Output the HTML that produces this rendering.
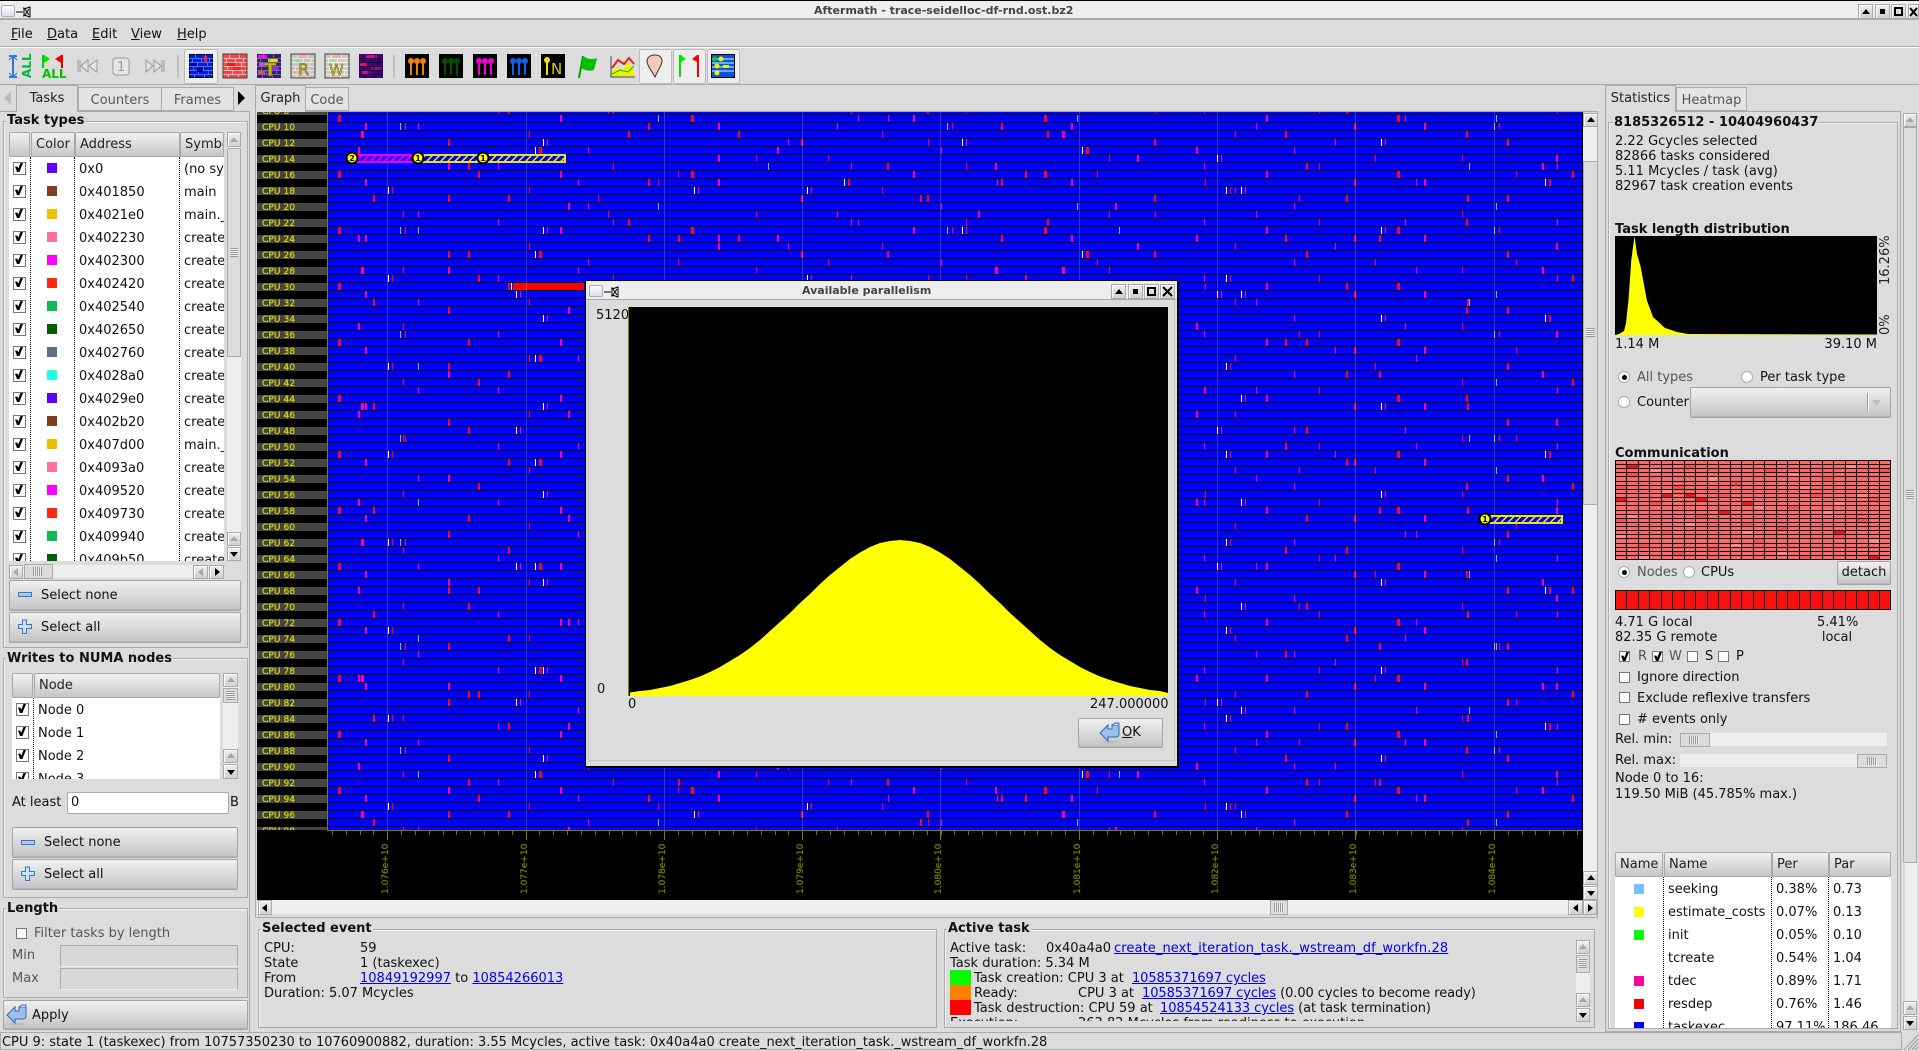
<!DOCTYPE html>
<html><head><meta charset="utf-8"><title>Aftermath</title>
<style>
html,body{margin:0;padding:0}
body{width:1919px;height:1051px;position:relative;overflow:hidden;background:#dcdcdc;font:13px/16px "DejaVu Sans","Liberation Sans",sans-serif;color:#111}
div,span,svg{box-sizing:border-box}
.a{position:absolute}
.t{position:absolute;white-space:nowrap;line-height:16px;margin-top:1px}
.g{color:#555}
.bd{font-weight:bold}
.tab{position:absolute;border:1px solid #aaa;background:#e4e4e4;color:#555;text-align:center;line-height:25px;border-bottom:1px solid #aaa}
.tab.on{background:#dcdcdc;color:#222;border-bottom:0;line-height:25px}
.fr{position:absolute;border:1px solid #aaa;box-shadow:inset 1px 1px 0 #f4f4f4}
.ti{position:absolute;font-weight:bold;background:#dcdcdc;padding:0 1px;white-space:nowrap;line-height:16px;color:#111;margin-top:1px}
.hd{position:absolute;border:1px solid #a8a8a8;border-radius:2px;background:linear-gradient(#f2f2f2,#c6c6c6);line-height:24px;padding-left:4px;color:#222;white-space:nowrap;overflow:hidden}
.btn{position:absolute;border:1px solid #a4a4a4;border-radius:2px;background:linear-gradient(#f0f0f0,#c4c4c4);box-shadow:inset 0 -1px 0 #b4b4b4}
.sb{position:absolute;background:#eee}
.sh{position:absolute;background:#dcdcdc;border:1px solid #aaa}
.sq{position:absolute;background:linear-gradient(#eee,#d0d0d0);border:1px solid #aaa;box-shadow:inset 1px 1px 0 #fff}
.up::after,.dn::after,.lf::after,.rt::after{content:"";position:absolute;left:50%;top:50%;width:0;height:0;border-style:solid;border-color:transparent}
.up::after{margin:-3px 0 0 -4px;border-width:0 4px 5px;border-bottom-color:#000}
.dn::after{margin:-2px 0 0 -4px;border-width:5px 4px 0;border-top-color:#000}
.lf::after{margin:-4px 0 0 -3px;border-width:4px 5px 4px 0;border-right-color:#000}
.rt::after{margin:-4px 0 0 -2px;border-width:4px 0 4px 5px;border-left-color:#000}
.dis::after{opacity:.25}
.cb{position:absolute;width:11px;height:11px;background:#fff;border:1px solid #777}
.cb.k::after{content:"";position:absolute;left:1px;top:0;width:8px;height:9px;background:#000;clip-path:polygon(0 40%,30% 40%,42% 62%,68% 0,100% 0,55% 100%,25% 100%)}
.rd{position:absolute;width:12px;height:12px;border-radius:50%;background:#fff;border:1px solid #aaa}
.rd.k::after{content:"";position:absolute;left:2.5px;top:2.5px;width:5px;height:5px;border-radius:50%;background:#000}
.rw{position:relative;height:23px;line-height:23px;white-space:nowrap}
.rw span{position:absolute;top:1px}
.rw b{position:absolute;width:10px;height:10px;top:6px}
.rw .cb{top:5px}
.l{color:#0000ee;text-decoration:underline}
.lb div{height:8px;margin-bottom:8px;background:#444;color:#d4d400;font-size:9px;line-height:10px;padding-left:5px;white-space:nowrap;letter-spacing:.1px;-webkit-text-stroke:.25px #d4d400}
.dot{position:absolute;width:0;border-left:1px dotted #000}
.w{position:absolute;background:#fff;overflow:hidden}
.sl .t,.at .t{margin-top:2px}
</style></head><body>

<!-- title bar -->
<div class="a" style="left:0;top:0;width:1919px;height:20px;background:#eee;border-top:1px solid #000;border-bottom:2px solid #aaa"></div>
<div class="a" style="left:1px;top:5px;width:14px;height:12px;background:linear-gradient(#fff,#dde);border:1px solid #aab;border-radius:2px"></div>
<svg class="a" style="left:15px;top:6px" width="16" height="12"><path d="M1 6H8M8 2H9V10H8M9 3L15 1V11L9 9M10 3L14 9M14 3L10 9" fill="none" stroke="#000"/></svg>
<div class="t bd" style="left:814px;top:2px;font-size:11px;color:#444">Aftermath - trace-seidelloc-df-rnd.ost.bz2</div>
<div class="sq up" style="left:1858px;top:4px;width:15px;height:15px"></div>
<div class="sq" style="left:1875px;top:4px;width:15px;height:15px"><div class="a" style="left:4px;top:4px;width:5px;height:5px;background:#000"></div></div>
<div class="sq" style="left:1891px;top:4px;width:15px;height:15px"><div class="a" style="left:2px;top:2px;width:9px;height:9px;border:2px solid #000"></div></div>
<div class="sq" style="left:1908px;top:4px;width:11px;height:15px"><svg class="a" style="left:0;top:2px" width="10" height="10"><path d="M1 1L8 9M8 1L1 9" stroke="#000" stroke-width="2"/></svg></div>

<!-- menu -->
<div class="a" style="left:0;top:46px;width:1919px;height:2px;background:linear-gradient(#aaa 50%,#fff 50%)"></div>
<div class="t" style="left:11px;top:26px"><u>F</u>ile</div>
<div class="t" style="left:47px;top:26px"><u>D</u>ata</div>
<div class="t" style="left:92px;top:26px"><u>E</u>dit</div>
<div class="t" style="left:131px;top:26px"><u>V</u>iew</div>
<div class="t" style="left:177px;top:26px"><u>H</u>elp</div>
<div class="a" style="left:0;top:84px;width:1919px;height:1px;background:#aaa"></div>

<!-- toolbar -->
<svg class="a" style="left:0;top:0" width="745" height="90" font-family="DejaVu Sans">
<defs><path id="m" fill="none" d="M0 4.5H24M0 8.5H24M0 12.5H24M0 16.5H24M0 20.5H24M6.5 0V4M16.5 0V4M3.5 5V8M12.5 5V8M20.5 5V8M8.5 9V12M18.5 9V12M4.5 13V16M14.5 13V16M9.5 17V20M19.5 17V20M5.5 21V24M15.5 21V24"/>
<g id="pin" stroke-width="2"><path d="M6 7V21M12 7V21M18 7V21"/></g></defs>
<g fill="#eee" stroke="#bbb"><rect x="184.500" y="49.500" width="33" height="34" rx="2"/><rect x="639.500" y="49.500" width="32" height="34" rx="2"/><rect x="673.500" y="49.500" width="32" height="34" rx="2"/><rect x="707.500" y="49.500" width="32" height="34" rx="2"/></g>
<path d="M13 57V76M9 56H17M9 77H17" stroke="#2878e0" stroke-width="2" fill="none"/><path d="M9 60L13 56L17 60M9 73L13 77L17 73" stroke="#2878e0" fill="none"/>
<text transform="translate(31,78) rotate(-90)" font-size="12" font-weight="bold" fill="#00b840">ALL</text>
<path d="M43 55V68" stroke="#00d000" stroke-width="2"/><path d="M44 55L50 59L44 63Z" fill="#00e000"/><path d="M62 55V68" stroke="#e00000" stroke-width="2"/><path d="M61 55L55 59L61 63Z" fill="#f00"/>
<text x="42" y="78" font-size="12" font-weight="bold" fill="#00c000">ALL</text>
<g fill="#e6e6e6" stroke="#999"><path d="M78 60V72M80 60V72" /><path d="M88 60L81 66L88 72Z"/><path d="M97 60L89 66L97 72Z"/><rect x="113" y="58" width="16" height="17" rx="3"/><path d="M164 60V72M162 60V72"/><path d="M146 60L153 66L146 72Z"/><path d="M154 60L161 66L154 72Z"/></g>
<text x="117" y="71" font-size="13" fill="#999">1</text>
<path d="M178 55V78M394 55V78" stroke="#c0c0c0" stroke-width="2"/>

<g transform="translate(189,54)"><rect width="24" height="24" fill="#000"/><rect x="1" y="1" width="22" height="22" fill="#0818e0"/><use href="#m" stroke="#5098e0" stroke-width=".7"/><rect x="15" y="2" width="3" height="6" fill="#f02040"/><rect x="8" y="14" width="6" height="4" fill="#000080"/><rect x="2" y="9" width="5" height="3" fill="#000080"/></g>
<g transform="translate(223,54)"><rect width="24" height="24" fill="#f04848"/><use href="#m" stroke="#ffb8b8"/><rect x="4" y="9" width="8" height="3" fill="#ff1010"/><rect y="13" x="10" width="7" height="3" fill="#ff2020"/><rect width="24" height="24" fill="none" stroke="#444"/></g>
<g transform="translate(257,54)"><rect width="24" height="24" fill="#302070"/><rect x="1" y="1" width="9" height="3" fill="#f0f"/><rect x="11" y="5" width="10" height="3" fill="#f0e000"/><rect x="2" y="9" width="7" height="3" fill="#e040e0"/><rect x="14" y="13" width="8" height="3" fill="#a020f0"/><rect x="1" y="17" width="7" height="3" fill="#f04080"/><use href="#m" stroke="#8080a0" stroke-width=".7"/><text x="7" y="22" font-size="18" font-weight="bold" fill="#c8b800" stroke="#554" stroke-width=".5">T</text></g>
<g transform="translate(291,54)"><rect width="24" height="24" fill="#c8c4b8"/><rect y="5" width="10" height="3" fill="#a0d0c0"/><rect x="12" y="13" width="10" height="3" fill="#b0c8e8"/><rect y="1" x="8" width="8" height="3" fill="#e8b0a8"/><rect y="17" x="2" width="8" height="3" fill="#e8b0a0"/><use href="#m" stroke="#f0f0f0" stroke-width=".7"/><text x="7" y="21" font-size="16" fill="#b8a800" stroke="#554" stroke-width=".4">R</text><rect width="24" height="24" fill="none" stroke="#444"/></g>
<g transform="translate(325,54)"><rect width="24" height="24" fill="#d0c8b8"/><rect y="5" width="10" height="3" fill="#b0d8b0"/><rect x="12" y="13" width="10" height="3" fill="#d0c8e8"/><rect y="1" x="8" width="8" height="3" fill="#e8b0a8"/><use href="#m" stroke="#fff" stroke-width=".7"/><text x="4" y="21" font-size="15" fill="#c8c800" stroke="#554" stroke-width=".4">W</text><rect width="24" height="24" fill="none" stroke="#444"/></g>
<g transform="translate(359,54)"><rect width="24" height="24" fill="#400080"/><rect x="6" y="1" width="12" height="3" fill="#e00090"/><rect x="1" y="9" width="8" height="3" fill="#f00080"/><rect x="12" y="13" width="10" height="3" fill="#a00090"/><rect x="3" y="17" width="8" height="3" fill="#e000a0"/><use href="#m" stroke="#000" stroke-width=".7"/></g>

<g transform="translate(405,54)"><rect width="24" height="24" fill="#000"/><use href="#pin" stroke="#f08000"/><g fill="#f08000"><circle cx="6" cy="7" r="3"/><circle cx="12" cy="7" r="3"/><circle cx="18" cy="7" r="3"/></g></g>
<g transform="translate(439,54)"><rect width="24" height="24" fill="#000"/><use href="#pin" stroke="#005000"/><g fill="#005000"><circle cx="6" cy="7" r="3"/><circle cx="12" cy="7" r="3"/><circle cx="18" cy="7" r="3"/></g></g>
<g transform="translate(473,54)"><rect width="24" height="24" fill="#000"/><use href="#pin" stroke="#f000d0"/><g fill="#f000d0"><circle cx="6" cy="7" r="3"/><circle cx="12" cy="7" r="3"/><circle cx="18" cy="7" r="3"/></g></g>
<g transform="translate(507,54)"><rect width="24" height="24" fill="#000"/><use href="#pin" stroke="#1060f0"/><g fill="#1060f0"><circle cx="6" cy="7" r="3"/><circle cx="12" cy="7" r="3"/><circle cx="18" cy="7" r="3"/></g></g>
<g transform="translate(541,54)"><rect width="24" height="24" fill="#000"/><path d="M6 7V21" stroke="#f0e000" stroke-width="2"/><circle cx="6" cy="6" r="3" fill="#f0e000"/><text x="10" y="20" font-size="15" fill="#e0d000">N</text></g>
<path d="M579 78L583 56" stroke="#00a000" stroke-width="2"/><path d="M583 56Q590 61 597 58L594 70Q588 72 581 68Z" fill="#00c000"/>
<path d="M611 56V77H635" stroke="#444" fill="none"/><path d="M612 72L618 66L622 71L628 62L634 70V76H612Z" fill="#f0f000"/><path d="M612 68L618 60L624 64L629 58L634 64" stroke="#e02020" stroke-width="2" fill="none"/><path d="M612 74L620 70L628 72L634 66" stroke="#00c000" fill="none"/>
<path d="M655 77C650 68 647 65 647 61C647 57 651 55 655 55C659 55 662 57 662 61C662 65 659 68 655 77Z" fill="#f8c8c0" stroke="#333"/>
<path d="M680 55V77" stroke="#00e000" stroke-width="2"/><path d="M681 55L686 59L681 62Z" fill="#00f000"/><path d="M698 55V77" stroke="#f00000" stroke-width="2"/><path d="M697 55L692 59L697 62Z" fill="#f00"/>
<g transform="translate(711,54)"><rect width="24" height="24" fill="#000"/><rect x="1" y="1" width="22" height="22" fill="#1050e0"/><path d="M1 5H23M1 9H23M1 13H23M1 17H23" stroke="#60b0f0" stroke-width="2"/><circle cx="4" cy="5" r="2.500" fill="#10d010"/><circle cx="10" cy="5" r="2.500" fill="#f0f000"/><circle cx="6" cy="12" r="2.500" fill="#f0f000"/><circle cx="6" cy="19" r="2.500" fill="#f0f000"/><rect x="12" y="11" width="6" height="3" fill="#f0f000"/></g>
</svg>

<!-- left tabs -->
<svg class="a" style="left:3px;top:89px" width="10" height="18"><path d="M8 2L1 9L8 16Z" fill="#bbb"/></svg>
<svg class="a" style="left:236px;top:89px" width="10" height="18"><path d="M2 2L9 9L2 16Z" fill="#000"/></svg>
<div class="tab on" style="left:16px;top:85px;width:62px;height:27px;z-index:2">Tasks</div>
<div class="tab" style="left:78px;top:87px;width:84px;height:24px">Counters</div>
<div class="tab" style="left:161px;top:87px;width:73px;height:24px">Frames</div>
<div class="a" style="left:0;top:111px;width:250px;height:1px;background:#aaa"></div>
<div class="a" style="left:249px;top:111px;width:1px;height:921px;background:#aaa"></div>

<!-- Task types -->
<div class="fr" style="left:3px;top:121px;width:245px;height:527px"></div>
<div class="ti" style="left:6px;top:112px">Task types</div>
<div class="hd" style="left:9px;top:132px;width:21px;height:25px"></div>
<div class="hd" style="left:31px;top:132px;width:44px;height:25px">Color</div>
<div class="hd" style="left:75px;top:132px;width:105px;height:25px">Address</div>
<div class="hd" style="left:180px;top:132px;width:44px;height:25px">Symbol</div>
<div class="w" style="left:9px;top:157px;width:215px;height:404px">
<div class="dot" style="left:21px;top:0;height:404px"></div><div class="dot" style="left:65px;top:0;height:404px"></div><div class="dot" style="left:170px;top:0;height:404px"></div>
<style>.r1 .cb{left:4px}.r1 b{left:38px}.r1 .x{left:70px}.r1 .y{left:175px}</style>
<div class="r1">
<div class="rw"><i class="cb k"></i><b style="background:#6000ff"></b><span class="x">0x0</span><span class="y">(no symbol)</span></div>
<div class="rw"><i class="cb k"></i><b style="background:#804020"></b><span class="x">0x401850</span><span class="y">main</span></div>
<div class="rw"><i class="cb k"></i><b style="background:#f0c000"></b><span class="x">0x4021e0</span><span class="y">main._</span></div>
<div class="rw"><i class="cb k"></i><b style="background:#ff70a0"></b><span class="x">0x402230</span><span class="y">create_</span></div>
<div class="rw"><i class="cb k"></i><b style="background:#ff00ff"></b><span class="x">0x402300</span><span class="y">create_</span></div>
<div class="rw"><i class="cb k"></i><b style="background:#ff2810"></b><span class="x">0x402420</span><span class="y">create_</span></div>
<div class="rw"><i class="cb k"></i><b style="background:#10b850"></b><span class="x">0x402540</span><span class="y">create_</span></div>
<div class="rw"><i class="cb k"></i><b style="background:#006000"></b><span class="x">0x402650</span><span class="y">create_</span></div>
<div class="rw"><i class="cb k"></i><b style="background:#607080"></b><span class="x">0x402760</span><span class="y">create_</span></div>
<div class="rw"><i class="cb k"></i><b style="background:#20ffe8"></b><span class="x">0x4028a0</span><span class="y">create_</span></div>
<div class="rw"><i class="cb k"></i><b style="background:#6000ff"></b><span class="x">0x4029e0</span><span class="y">create_</span></div>
<div class="rw"><i class="cb k"></i><b style="background:#804020"></b><span class="x">0x402b20</span><span class="y">create_</span></div>
<div class="rw"><i class="cb k"></i><b style="background:#f0c000"></b><span class="x">0x407d00</span><span class="y">main._</span></div>
<div class="rw"><i class="cb k"></i><b style="background:#ff70a0"></b><span class="x">0x4093a0</span><span class="y">create_</span></div>
<div class="rw"><i class="cb k"></i><b style="background:#ff00ff"></b><span class="x">0x409520</span><span class="y">create_</span></div>
<div class="rw"><i class="cb k"></i><b style="background:#ff2810"></b><span class="x">0x409730</span><span class="y">create_</span></div>
<div class="rw"><i class="cb k"></i><b style="background:#10b850"></b><span class="x">0x409940</span><span class="y">create_</span></div>
<div class="rw"><i class="cb k"></i><b style="background:#006000"></b><span class="x">0x409b50</span><span class="y">create_</span></div>
</div></div>
<div class="sb" style="left:227px;top:132px;width:14px;height:428px"></div>
<div class="sq up dis" style="left:227px;top:132px;width:14px;height:15px"></div>
<div class="sh" style="left:227px;top:148px;width:14px;height:209px"></div>
<div class="a" style="left:230px;top:248px;width:8px;height:9px;background:repeating-linear-gradient(#999 0 1px,#eee 1px 2px)"></div>
<div class="sq up dis" style="left:227px;top:532px;width:14px;height:14px"></div>
<div class="sq dn" style="left:227px;top:547px;width:14px;height:14px"></div>
<div class="sb" style="left:9px;top:565px;width:215px;height:13px"></div>
<div class="sq lf dis" style="left:9px;top:565px;width:14px;height:14px"></div>
<div class="sh" style="left:24px;top:564px;width:29px;height:15px"></div>
<div class="a" style="left:33px;top:567px;width:9px;height:9px;background:repeating-linear-gradient(90deg,#999 0 1px,#eee 1px 2px)"></div>
<div class="sq lf dis" style="left:193px;top:565px;width:15px;height:14px"></div>
<div class="sq rt" style="left:209px;top:565px;width:15px;height:14px"></div>

<div class="btn" style="left:9px;top:580px;width:232px;height:31px"></div>
<div class="a" style="left:18px;top:592px;width:14px;height:5px;border:1px solid #3878c0;background:#a8c8f0"></div>
<div class="t" style="left:41px;top:587px">Select none</div>
<div class="btn" style="left:9px;top:612px;width:232px;height:31px"></div>
<svg class="a" style="left:17px;top:619px" width="16" height="16"><path d="M5.500 1H9.500V5.500H14.500V9.500H9.500V14.500H5.500V9.500H1.500V5.500H5.500Z" fill="#d0e0f8" stroke="#3878c0"/></svg>
<div class="t" style="left:41px;top:619px">Select all</div>

<!-- NUMA -->
<div class="fr" style="left:3px;top:658px;width:245px;height:240px"></div>
<div class="ti" style="left:6px;top:650px">Writes to NUMA nodes</div>
<div class="hd" style="left:12px;top:673px;width:21px;height:25px"></div>
<div class="hd" style="left:34px;top:673px;width:186px;height:25px">Node</div>
<div class="w" style="left:12px;top:698px;width:208px;height:81px">
<div class="dot" style="left:21px;top:0;height:81px"></div>
<style>.r2 .cb{left:4px}.r2 .x{left:26px}</style>
<div class="r2">
<div class="rw"><i class="cb k"></i><span class="x">Node 0</span></div>
<div class="rw"><i class="cb k"></i><span class="x">Node 1</span></div>
<div class="rw"><i class="cb k"></i><span class="x">Node 2</span></div>
<div class="rw"><i class="cb k"></i><span class="x">Node 3</span></div>
</div></div>
<div class="sb" style="left:223px;top:673px;width:15px;height:105px"></div>
<div class="sq up dis" style="left:223px;top:673px;width:15px;height:14px"></div>
<div class="sh" style="left:223px;top:688px;width:15px;height:15px"></div>
<div class="a" style="left:226px;top:691px;width:9px;height:9px;background:repeating-linear-gradient(#999 0 1px,#eee 1px 2px)"></div>
<div class="sq up dis" style="left:223px;top:749px;width:15px;height:14px"></div>
<div class="sq dn" style="left:223px;top:764px;width:15px;height:15px"></div>
<div class="t" style="left:12px;top:794px">At least</div>
<div class="a" style="left:67px;top:792px;width:162px;height:22px;background:#fff;border:1px solid #aaa;border-radius:2px;padding-left:3px;line-height:20px">0</div>
<div class="t" style="left:230px;top:794px">B</div>
<div class="btn" style="left:12px;top:827px;width:226px;height:31px"></div>
<div class="a" style="left:21px;top:840px;width:14px;height:5px;border:1px solid #3878c0;background:#a8c8f0"></div>
<div class="t" style="left:44px;top:834px">Select none</div>
<div class="btn" style="left:12px;top:859px;width:226px;height:31px"></div>
<svg class="a" style="left:20px;top:866px" width="16" height="16"><path d="M5.500 1H9.500V5.500H14.500V9.500H9.500V14.500H5.500V9.500H1.500V5.500H5.500Z" fill="#d0e0f8" stroke="#3878c0"/></svg>
<div class="t" style="left:44px;top:866px">Select all</div>

<!-- Length -->
<div class="fr" style="left:3px;top:908px;width:245px;height:90px"></div>
<div class="ti" style="left:6px;top:900px">Length</div>
<div class="cb" style="left:16px;top:928px"></div>
<div class="t g" style="left:34px;top:925px">Filter tasks by length</div>
<div class="t g" style="left:12px;top:947px">Min</div>
<div class="a" style="left:60px;top:945px;width:178px;height:22px;border:1px solid #aaa;border-bottom-color:#eee;background:#d8d8d8"></div>
<div class="t g" style="left:12px;top:970px">Max</div>
<div class="a" style="left:60px;top:968px;width:178px;height:22px;border:1px solid #aaa;border-bottom-color:#eee;background:#d8d8d8"></div>
<div class="btn" style="left:3px;top:1000px;width:245px;height:30px"></div>
<svg class="a" style="left:6px;top:1004px" width="22" height="22"><ellipse cx="11" cy="20" rx="8" ry="1.500" fill="#bbb"/><path d="M9 3V7H13V3H20V12Q20 15 17 15H9V19L1 11Z" fill="#9cc0ec" stroke="#3068b0"/><path d="M13 3L16 1H20V3" fill="#d0e0f8" stroke="#3068b0"/></svg>
<div class="t" style="left:32px;top:1007px">Apply</div>

<!-- Graph tabs -->
<div class="tab on" style="left:255px;top:85px;width:51px;height:27px;z-index:2">Graph</div>
<div class="tab" style="left:305px;top:87px;width:44px;height:24px">Code</div>

<!-- graph frame -->
<div class="a" style="left:255px;top:111px;width:1343px;height:807px;border:1px solid #aaa"></div>
<div class="sb" style="left:257px;top:900px;width:1311px;height:14px"></div>
<div class="sq lf" style="left:258px;top:900px;width:14px;height:15px"></div>
<div class="sh" style="left:1270px;top:900px;width:18px;height:15px"></div>
<div class="a" style="left:1274px;top:903px;width:10px;height:9px;background:repeating-linear-gradient(90deg,#999 0 1px,#eee 1px 2px)"></div>
<div class="sq lf" style="left:1568px;top:900px;width:15px;height:15px"></div>
<div class="sq rt" style="left:1583px;top:900px;width:14px;height:15px"></div>
<div class="sb" style="left:1583px;top:113px;width:14px;height:786px"></div>
<div class="sq up" style="left:1583px;top:113px;width:15px;height:14px"></div>
<div class="sh" style="left:1583px;top:161px;width:15px;height:344px"></div>
<div class="a" style="left:1586px;top:328px;width:9px;height:9px;background:repeating-linear-gradient(#999 0 1px,#eee 1px 2px)"></div>
<div class="sq up" style="left:1583px;top:871px;width:15px;height:14px"></div>
<div class="sq dn" style="left:1583px;top:886px;width:15px;height:14px"></div>

<!-- chart -->
<svg class="a" style="left:0;top:0" width="1919" height="1051" font-family="DejaVu Sans" shape-rendering="crispEdges">
<defs>
<pattern id="ln" x="328" y="122" width="10" height="8" patternUnits="userSpaceOnUse"><rect width="10" height="1"/></pattern>
<pattern id="pa" x="328" y="122" width="353" height="56" patternUnits="userSpaceOnUse"><path fill="#ff0030" d="M120 17h2v7h-2zM75 33h1v7h-1zM10 49h3v7h-3zM201 9h1v7h-1zM320 1h2v7h-2zM285 41h1v7h-1z"/><path fill="#ff00a0" d="M37 1h2v7h-2zM260 25h1v7h-1zM170 41h1v7h-1zM232 49h2v7h-2z"/></pattern>
<pattern id="pb" x="328" y="122" width="419" height="88" patternUnits="userSpaceOnUse"><path fill="#ff00a0" d="M90 1h1v7h-1zM219 17h1v7h-1zM390 33h2v7h-2zM250 57h1v7h-1zM30 25h2v7h-2z"/><path fill="#ff0030" d="M300 9h2v7h-2zM64 65h1v7h-1zM140 41h2v7h-2zM350 49h1v7h-1zM180 73h2v7h-2z"/><path fill="#fff" d="M215 17h1v7h-1zM60 65h1v7h-1z"/><path fill="#70c0ff" d="M330 81h1v7h-1z"/></pattern>
<pattern id="pc" x="328" y="122" width="547" height="104" patternUnits="userSpaceOnUse"><path fill="#ff0030" d="M77 1h1v7h-1zM410 9h2v7h-2zM211 25h3v7h-3zM500 33h1v7h-1zM150 49h2v7h-2zM330 57h1v7h-1zM45 73h2v7h-2zM280 89h1v7h-1z"/><path fill="#ff00a0" d="M460 17h1v7h-1zM120 41h2v7h-2zM370 65h1v7h-1zM240 81h2v7h-2zM530 97h1v7h-1z"/><path fill="#fff" d="M207 25h1v7h-1zM366 65h1v7h-1z"/><path fill="#70c0ff" d="M72 1h1v7h-1z"/></pattern>
<pattern id="pd" x="328" y="122" width="701" height="136" patternUnits="userSpaceOnUse"><path fill="#ff00a0" d="M33 9h3v7h-3zM192 33h1v7h-1zM650 89h2v7h-2zM560 129h1v7h-1z"/><path fill="#ff0030" d="M600 17h1v7h-1zM520 57h2v7h-2zM270 73h1v7h-1zM350 113h2v7h-2z"/><path fill="#fff" d="M188 33h1v7h-1zM516 57h1v7h-1z"/><path fill="#70c0ff" d="M440 41h1v7h-1zM90 105h1v7h-1z"/></pattern>
<pattern id="hy" width="5" height="5" patternUnits="userSpaceOnUse" patternTransform="rotate(45)"><rect width="5" height="5" fill="#0000ff"/><rect width="1.500" height="5" fill="#f0f000"/></pattern>
<pattern id="hm" width="5" height="5" patternUnits="userSpaceOnUse" patternTransform="rotate(45)"><rect width="5" height="5" fill="#3000f0"/><rect width="1.500" height="5" fill="#f000f0"/></pattern>
<pattern id="tk" x="332" y="830" width="83" height="10" patternUnits="userSpaceOnUse"><path d="M0 0h1v5h-1zM14 0h1v5h-1zM28 0h1v5h-1zM41 0h1v5h-1zM55 0h1v5h-1zM69 0h1v5h-1z" fill="#808000"/></pattern>
</defs>
<rect x="257" y="112" width="1326" height="788" fill="#000"/>
<rect x="328" y="112" width="1254" height="718" fill="#0000ff"/>
<rect x="328" y="112" width="1254" height="718" fill="url(#pa)"/>
<rect x="328" y="112" width="1254" height="718" fill="url(#pb)"/>
<rect x="328" y="112" width="1254" height="718" fill="url(#pc)"/>
<rect x="328" y="112" width="1254" height="718" fill="url(#pd)"/>
<rect x="328" y="112" width="1254" height="718" fill="url(#ln)"/>
<rect x="513" y="283" width="71" height="7" fill="#ff0000"/><rect x="511" y="283" width="1" height="7" fill="#fff"/>
<g fill="#ffffff" fill-opacity=".2"><rect x="387" y="112" width="1" height="718"/><rect x="526" y="112" width="1" height="718"/><rect x="664" y="112" width="1" height="718"/><rect x="802" y="112" width="1" height="718"/><rect x="940" y="112" width="1" height="718"/><rect x="1079" y="112" width="1" height="718"/><rect x="1217" y="112" width="1" height="718"/><rect x="1355" y="112" width="1" height="718"/><rect x="1494" y="112" width="1" height="718"/></g>
<rect x="327" y="112" width="1" height="718" fill="#808000"/><rect x="327" y="830" width="1255" height="1" fill="#808000"/>
<rect x="328" y="830" width="1254" height="6" fill="url(#tk)"/>
<g fill="#808000"><rect x="387" y="830" width="1" height="10"/><rect x="526" y="830" width="1" height="10"/><rect x="664" y="830" width="1" height="10"/><rect x="802" y="830" width="1" height="10"/><rect x="940" y="830" width="1" height="10"/><rect x="1079" y="830" width="1" height="10"/><rect x="1217" y="830" width="1" height="10"/><rect x="1355" y="830" width="1" height="10"/><rect x="1494" y="830" width="1" height="10"/></g>
<g font-size="9" fill="#808000" stroke="#808000" stroke-width=".2" shape-rendering="auto">
<text transform="translate(388,894) rotate(-90)">1.076e+10</text><text transform="translate(527,894) rotate(-90)">1.077e+10</text><text transform="translate(665,894) rotate(-90)">1.078e+10</text><text transform="translate(803,894) rotate(-90)">1.079e+10</text><text transform="translate(941,894) rotate(-90)">1.080e+10</text><text transform="translate(1080,894) rotate(-90)">1.081e+10</text><text transform="translate(1218,894) rotate(-90)">1.082e+10</text><text transform="translate(1356,894) rotate(-90)">1.083e+10</text><text transform="translate(1495,894) rotate(-90)">1.084e+10</text>
</g>
<g shape-rendering="auto">
<rect x="355" y="155" width="60" height="7" fill="url(#hm)" stroke="#f000f0" stroke-width="2"/>
<rect x="416" y="155" width="149" height="7" fill="url(#hy)" stroke="#e8e800" stroke-width="2"/>
<rect x="1486" y="516" width="76" height="7" fill="url(#hy)" stroke="#e8e800" stroke-width="2"/>
<g fill="#ff0" stroke="#000" stroke-width="2"><circle cx="352" cy="158" r="5.500"/><circle cx="418" cy="158" r="5.500"/><circle cx="483" cy="158" r="5.500"/><circle cx="1485" cy="519" r="5.500"/></g>
<g font-size="8" font-weight="bold" text-anchor="middle" fill="#000"><text x="352" y="161">2</text><text x="418" y="161">1</text><text x="483" y="161">1</text><text x="1485" y="522">1</text></g>
</g>
</svg>
<div class="a lb" style="left:257px;top:112px;width:70px;height:718px;overflow:hidden"><div style="margin-top:-5px">CPU 8</div><div>CPU 10</div><div>CPU 12</div><div>CPU 14</div><div>CPU 16</div><div>CPU 18</div><div>CPU 20</div><div>CPU 22</div><div>CPU 24</div><div>CPU 26</div><div>CPU 28</div><div>CPU 30</div><div>CPU 32</div><div>CPU 34</div><div>CPU 36</div><div>CPU 38</div><div>CPU 40</div><div>CPU 42</div><div>CPU 44</div><div>CPU 46</div><div>CPU 48</div><div>CPU 50</div><div>CPU 52</div><div>CPU 54</div><div>CPU 56</div><div>CPU 58</div><div>CPU 60</div><div>CPU 62</div><div>CPU 64</div><div>CPU 66</div><div>CPU 68</div><div>CPU 70</div><div>CPU 72</div><div>CPU 74</div><div>CPU 76</div><div>CPU 78</div><div>CPU 80</div><div>CPU 82</div><div>CPU 84</div><div>CPU 86</div><div>CPU 88</div><div>CPU 90</div><div>CPU 92</div><div>CPU 94</div><div>CPU 96</div><div>CPU 98</div></div>

<!-- Selected event -->
<div class="fr" style="left:258px;top:929px;width:679px;height:99px"></div>
<div class="ti" style="left:261px;top:920px">Selected event</div>
<div class="sl">
<div class="t" style="left:264px;top:939px">CPU:</div><div class="t" style="left:360px;top:939px">59</div>
<div class="t" style="left:264px;top:954px">State</div><div class="t" style="left:360px;top:954px">1 (taskexec)</div>
<div class="t" style="left:264px;top:969px">From</div><div class="t" style="left:360px;top:969px"><span class="l">10849192997</span> to <span class="l">10854266013</span></div>
<div class="t" style="left:264px;top:984px">Duration: 5.07 Mcycles</div>
</div>

<!-- Active task -->
<div class="fr" style="left:944px;top:929px;width:651px;height:99px"></div>
<div class="ti" style="left:947px;top:920px">Active task</div>
<div class="a at" style="left:948px;top:940px;width:626px;height:81px;overflow:hidden">
<div class="t" style="left:2px;top:-1px">Active task:</div><div class="t" style="left:98px;top:-1px">0x40a4a0</div><div class="t" style="left:166px;top:-1px;letter-spacing:.1px"><span class="l">create_next_iteration_task._wstream_df_workfn.28</span></div>
<div class="t" style="left:2px;top:14px">Task duration: 5.34 M</div>
<div class="a" style="left:2px;top:30px;width:21px;height:15px;background:#00ff00"></div>
<div class="a" style="left:2px;top:45px;width:21px;height:15px;background:#ff8000"></div>
<div class="a" style="left:2px;top:60px;width:21px;height:15px;background:#ff0000"></div>
<div class="t" style="left:26px;top:29px">Task creation: CPU 3 at</div><div class="t" style="left:184px;top:29px;letter-spacing:-.1px"><span class="l">10585371697 cycles</span></div>
<div class="t" style="left:26px;top:44px">Ready:</div><div class="t" style="left:130px;top:44px">CPU 3 at</div><div class="t" style="left:194px;top:44px;letter-spacing:-.08px"><span class="l">10585371697 cycles</span> (0.00 cycles to become ready)</div>
<div class="t" style="left:26px;top:59px">Task destruction: CPU 59 at</div><div class="t" style="left:212px;top:59px;letter-spacing:-.08px"><span class="l">10854524133 cycles</span> (at task termination)</div>
<div class="t" style="left:2px;top:74px">Execution:</div><div class="t" style="left:130px;top:74px">263.82 Mcycles from readiness to execution</div>
</div>
<div class="sb" style="left:1576px;top:940px;width:14px;height:82px"></div>
<div class="sq up dis" style="left:1576px;top:940px;width:14px;height:14px"></div>
<div class="sh" style="left:1576px;top:955px;width:14px;height:18px"></div>
<div class="a" style="left:1579px;top:959px;width:8px;height:9px;background:repeating-linear-gradient(#999 0 1px,#eee 1px 2px)"></div>
<div class="sq up dis" style="left:1576px;top:993px;width:14px;height:14px"></div>
<div class="sq dn" style="left:1576px;top:1008px;width:14px;height:14px"></div>

<!-- Dialog -->
<div class="a" style="left:585px;top:280px;width:594px;height:488px;background:#dcdcdc;border:1px solid #000;border-right-width:2px;border-bottom-width:2px"></div>
<div class="a" style="left:586px;top:281px;width:591px;height:19px;background:#eee;border-bottom:1px solid #aaa"></div>
<div class="a" style="left:588px;top:300px;width:587px;height:461px;border:1px solid #c4c4c4;border-top:0"></div>
<div class="a" style="left:589px;top:285px;width:14px;height:12px;background:linear-gradient(#fff,#dde);border:1px solid #aab;border-radius:2px"></div>
<svg class="a" style="left:603px;top:286px" width="16" height="12"><path d="M1 6H8M8 2H9V10H8M9 3L15 1V11L9 9M10 3L14 9M14 3L10 9" fill="none" stroke="#000"/></svg>
<div class="t bd" style="left:802px;top:282px;font-size:11px;color:#444">Available parallelism</div>
<div class="sq up" style="left:1111px;top:284px;width:15px;height:15px"></div>
<div class="sq" style="left:1128px;top:284px;width:15px;height:15px"><div class="a" style="left:4px;top:4px;width:5px;height:5px;background:#000"></div></div>
<div class="sq" style="left:1144px;top:284px;width:15px;height:15px"><div class="a" style="left:2px;top:2px;width:9px;height:9px;border:2px solid #000"></div></div>
<div class="sq" style="left:1160px;top:284px;width:15px;height:15px"><svg class="a" style="left:1px;top:1px" width="11" height="11"><path d="M1 1L10 10M10 1L1 10" stroke="#000" stroke-width="2"/></svg></div>
<svg class="a" style="left:628px;top:307px" width="540" height="389"><rect width="540" height="389" fill="#000"/><rect width="1" height="389" fill="#808000"/>
<g transform="translate(-628,-307)"><path fill="#ff0" d="M630 696V692.500L640 691L650 690L660 688L670 686L680 683L690 680L700 676.500L710 672L720 667L730 661L740 655L750 648L760 640L770 631L780 622L790 613L800 603L810 594L820 584L830 575L840 567L850 559L860 552.500L870 547L880 543L890 541L900 540L910 541L920 543L930 547L940 552.500L950 559L960 567L970 575L980 584L990 594L1000 603L1010 613L1020 622L1030 631L1040 640L1050 648L1060 655L1070 661L1080 667L1090 672L1100 676.500L1110 680L1120 683L1130 686L1140 688L1150 690L1160 691L1168 693V696Z"/></g></svg>
<div class="t" style="left:596px;top:307px">5120</div>
<div class="t" style="left:597px;top:681px">0</div>
<div class="t" style="left:628px;top:696px">0</div>
<div class="t" style="left:1090px;top:696px">247.000000</div>
<div class="btn" style="left:1078px;top:718px;width:85px;height:30px"></div>
<svg class="a" style="left:1099px;top:722px" width="22" height="22"><ellipse cx="11" cy="20" rx="8" ry="1.500" fill="#bbb"/><path d="M9 3V7H13V3H20V12Q20 15 17 15H9V19L1 11Z" fill="#9cc0ec" stroke="#3068b0"/><path d="M13 3L16 1H20V3" fill="#d0e0f8" stroke="#3068b0"/></svg>
<div class="t" style="left:1122px;top:724px"><u>O</u>K</div>

<!-- Right panel -->
<div class="tab on" style="left:1605px;top:85px;width:71px;height:27px;z-index:2">Statistics</div>
<div class="tab" style="left:1676px;top:87px;width:71px;height:24px">Heatmap</div>
<div class="a" style="left:1605px;top:111px;width:296px;height:921px;border:1px solid #aaa"></div>
<div class="fr" style="left:1608px;top:122px;width:290px;height:907px"></div>
<div class="ti" style="left:1613px;top:114px">8185326512 - 10404960437</div>
<div class="t" style="left:1615px;top:133px">2.22 Gcycles selected</div>
<div class="t" style="left:1615px;top:148px">82866 tasks considered</div>
<div class="t" style="left:1615px;top:163px">5.11 Mcycles / task (avg)</div>
<div class="t" style="left:1615px;top:178px">82967 task creation events</div>
<div class="t bd" style="left:1615px;top:221px">Task length distribution</div>
<svg class="a" style="left:1615px;top:236px" width="300" height="115" font-family="DejaVu Sans"><rect width="262" height="99" fill="#000"/>
<path fill="#ff0" d="M0 99L4 98L9 95L11 87L13.500 64L16.300 24L19.500 0L22 18L25.700 31L31.800 64L38 81L50 92L62 96L73 98L262 98.500V99Z"/>
<text transform="translate(274,49) rotate(-90)" font-size="13" fill="#222">16.26%</text><text transform="translate(274,99) rotate(-90)" font-size="13" fill="#222">0%</text></svg>
<div class="t" style="left:1615px;top:336px">1.14 M</div>
<div class="t" style="right:42px;top:336px">39.10 M</div>

<div class="rd k" style="left:1618px;top:371px"></div><div class="t g" style="left:1637px;top:369px">All types</div>
<div class="rd" style="left:1741px;top:371px"></div><div class="t" style="left:1760px;top:369px">Per task type</div>
<div class="rd" style="left:1618px;top:396px"></div><div class="t" style="left:1637px;top:394px">Counter</div>
<div class="btn" style="left:1690px;top:387px;width:201px;height:31px"></div>
<div class="a" style="left:1867px;top:393px;width:2px;height:19px;background:linear-gradient(90deg,#999 50%,#fff 50%)"></div>
<svg class="a" style="left:1871px;top:399px" width="12" height="8"><path d="M1 1H10L5.500 7Z" fill="#bbb"/></svg>

<div class="t bd" style="left:1615px;top:445px">Communication</div>
<svg class="a" style="left:1615px;top:460px" width="276" height="100" shape-rendering="crispEdges"><rect width="276" height="100" fill="#ff6868"/>
<path fill="#ff4c4c" d="M12 12h11v4h-11zM58 25h11v4h-11zM104 33h11v4h-11zM150 8h11v4h-11zM207 16h12v5h-12zM253 37h11v4h-11zM35 41h11v4h-11zM81 54h11v4h-11zM127 62h11v4h-11zM173 45h11v4h-11zM219 74h11v4h-11zM0 58h12v4h-12zM46 70h12v4h-12zM92 87h11v4h-11zM138 78h12v5h-12zM184 95h12v5h-12zM242 58h11v4h-11zM23 83h12v4h-12zM69 4h12v4h-12zM115 21h12v4h-12zM196 33h11v4h-11zM265 8h11v4h-11zM161 66h12v4h-12zM0 25h12v4h-12zM58 91h11v4h-11z"/>
<path fill="#ff8888" d="M35 8h11v4h-11zM46 29h12v4h-12zM92 16h11v5h-11zM138 45h12v4h-12zM184 25h12v4h-12zM230 4h12v4h-12zM12 54h11v4h-11zM69 62h12v4h-12zM115 83h12v4h-12zM161 91h12v4h-12zM207 50h12v4h-12zM253 78h12v5h-12zM23 95h12v4h-12zM242 33h11v4h-11zM81 37h11v4h-11zM127 70h11v4h-11zM173 12h11v4h-11zM219 41h11v4h-11zM0 74h12v4h-12z"/>
<path fill="#ff1010" d="M12 4h11v4h-11zM69 33h12v4h-12zM81 37h11v4h-11zM104 50h11v4h-11zM219 70h11v4h-11zM253 95h12v4h-12zM0 37h12v4h-12zM46 33h12v4h-12zM127 41h11v4h-11z"/>
<path stroke="#000" fill="none" d="M0 .5H276M0 4.500H276M0 8.500H276M0 12.500H276M0 16.500H276M0 21.500H276M0 25.500H276M0 29.500H276M0 33.500H276M0 37.500H276M0 41.500H276M0 45.500H276M0 50.500H276M0 54.500H276M0 58.500H276M0 62.500H276M0 66.500H276M0 70.500H276M0 74.500H276M0 78.500H276M0 83.500H276M0 87.500H276M0 91.500H276M0 95.500H276M0 99.500H276M.5 0V100M11.500 0V100M23.500 0V100M34.500 0V100M46.500 0V100M57.500 0V100M69.500 0V100M80.500 0V100M92.500 0V100M103.500 0V100M115.500 0V100M126.500 0V100M138.500 0V100M149.500 0V100M161.500 0V100M172.500 0V100M184.500 0V100M195.500 0V100M207.500 0V100M218.500 0V100M230.500 0V100M241.500 0V100M253.500 0V100M264.500 0V100M275.500 0V100"/></svg>

<div class="rd k" style="left:1618px;top:566px"></div><div class="t g" style="left:1637px;top:564px">Nodes</div>
<div class="rd" style="left:1683px;top:566px"></div><div class="t" style="left:1701px;top:564px">CPUs</div>
<div class="btn" style="left:1837px;top:561px;width:54px;height:24px;text-align:center;line-height:22px">detach</div>
<svg class="a" style="left:1615px;top:590px" width="276" height="20" shape-rendering="crispEdges"><rect width="276" height="20" fill="#f81010"/><path stroke="#000" fill="none" d="M0 .5H276M0 19.500H276M.5 0V20M11.500 0V20M23.500 0V20M34.500 0V20M46.500 0V20M57.500 0V20M69.500 0V20M80.500 0V20M92.500 0V20M103.500 0V20M115.500 0V20M126.500 0V20M138.500 0V20M149.500 0V20M161.500 0V20M172.500 0V20M184.500 0V20M195.500 0V20M207.500 0V20M218.500 0V20M230.500 0V20M241.500 0V20M253.500 0V20M264.500 0V20M275.500 0V20"/></svg>
<div class="t" style="left:1615px;top:614px">4.71 G local</div>
<div class="t" style="left:1615px;top:629px">82.35 G remote</div>
<div class="t" style="left:1817px;top:614px;width:40px;text-align:center">5.41%</div>
<div class="t" style="left:1817px;top:629px;width:40px;text-align:center">local</div>

<div class="cb k" style="left:1619px;top:651px"></div><div class="t g" style="left:1638px;top:648px">R</div>
<div class="cb k" style="left:1652px;top:651px"></div><div class="t g" style="left:1669px;top:648px">W</div>
<div class="cb" style="left:1687px;top:651px"></div><div class="t" style="left:1705px;top:648px">S</div>
<div class="cb" style="left:1718px;top:651px"></div><div class="t" style="left:1736px;top:648px">P</div>
<div class="cb" style="left:1619px;top:672px"></div><div class="t" style="left:1637px;top:669px">Ignore direction</div>
<div class="cb" style="left:1619px;top:692px"></div><div class="t" style="left:1637px;top:690px">Exclude reflexive transfers</div>
<div class="cb" style="left:1619px;top:714px"></div><div class="t" style="left:1637px;top:711px"># events only</div>
<div class="t" style="left:1615px;top:731px">Rel. min:</div>
<div class="sb" style="left:1680px;top:733px;width:207px;height:13px"></div>
<div class="sh" style="left:1680px;top:733px;width:30px;height:14px"></div>
<div class="a" style="left:1689px;top:736px;width:10px;height:8px;background:repeating-linear-gradient(90deg,#999 0 1px,#eee 1px 2px)"></div>
<div class="t" style="left:1615px;top:752px">Rel. max:</div>
<div class="sb" style="left:1680px;top:754px;width:207px;height:13px"></div>
<div class="sh" style="left:1857px;top:754px;width:30px;height:14px"></div>
<div class="a" style="left:1867px;top:757px;width:10px;height:8px;background:repeating-linear-gradient(90deg,#999 0 1px,#eee 1px 2px)"></div>
<div class="t" style="left:1615px;top:770px">Node 0 to 16:</div>
<div class="t" style="left:1615px;top:786px">119.50 MiB (45.785% max.)</div>

<div class="hd" style="left:1615px;top:852px;width:48px;height:25px">Name</div>
<div class="hd" style="left:1664px;top:852px;width:108px;height:25px">Name</div>
<div class="hd" style="left:1772px;top:852px;width:57px;height:25px">Per</div>
<div class="hd" style="left:1829px;top:852px;width:62px;height:25px">Par</div>
<div class="w" style="left:1615px;top:877px;width:276px;height:151px">
<div class="dot" style="left:48px;top:0;height:151px"></div><div class="dot" style="left:156px;top:0;height:151px"></div><div class="dot" style="left:213px;top:0;height:151px"></div>
<style>.r3 b{left:19px;top:7px}.r3 .x{left:53px}.r3 .y{left:161px}.r3 .z{left:218px}</style>
<div class="r3">
<div class="rw"><b style="background:#78c0ff"></b><span class="x">seeking</span><span class="y">0.38%</span><span class="z">0.73</span></div>
<div class="rw"><b style="background:#ffff00"></b><span class="x">estimate_costs</span><span class="y">0.07%</span><span class="z">0.13</span></div>
<div class="rw"><b style="background:#00ff00"></b><span class="x">init</span><span class="y">0.05%</span><span class="z">0.10</span></div>
<div class="rw"><b style="background:#ffffff"></b><span class="x">tcreate</span><span class="y">0.54%</span><span class="z">1.04</span></div>
<div class="rw"><b style="background:#ff00a0"></b><span class="x">tdec</span><span class="y">0.89%</span><span class="z">1.71</span></div>
<div class="rw"><b style="background:#ff0000"></b><span class="x">resdep</span><span class="y">0.76%</span><span class="z">1.46</span></div>
<div class="rw"><b style="background:#0000ff"></b><span class="x">taskexec</span><span class="y">97.11%</span><span class="z">186.46</span></div>
</div></div>

<div class="sb" style="left:1905px;top:113px;width:12px;height:917px"></div>
<div class="sq up dis" style="left:1903px;top:113px;width:14px;height:14px"></div>
<div class="sh" style="left:1903px;top:127px;width:14px;height:736px"></div>
<div class="a" style="left:1906px;top:490px;width:8px;height:9px;background:repeating-linear-gradient(#999 0 1px,#eee 1px 2px)"></div>
<div class="sq up dis" style="left:1903px;top:1001px;width:14px;height:14px"></div>
<div class="sq dn" style="left:1903px;top:1016px;width:14px;height:14px"></div>

<!-- status -->
<div class="a" style="left:0;top:1032px;width:1902px;height:18px;border:1px solid #aaa;background:#dcdcdc"></div>
<div class="t" style="left:2px;top:1034px;letter-spacing:-.02px">CPU 9: state 1 (taskexec) from 10757350230 to 10760900882, duration: 3.55 Mcycles, active task: 0x40a4a0 create_next_iteration_task._wstream_df_workfn.28</div>
<svg class="a" style="left:1902px;top:1033px" width="17" height="18"><path d="M16 2L2 17M16 6L6 17M16 10L10 17M16 14L13 17" stroke="#999"/></svg>
</body></html>
